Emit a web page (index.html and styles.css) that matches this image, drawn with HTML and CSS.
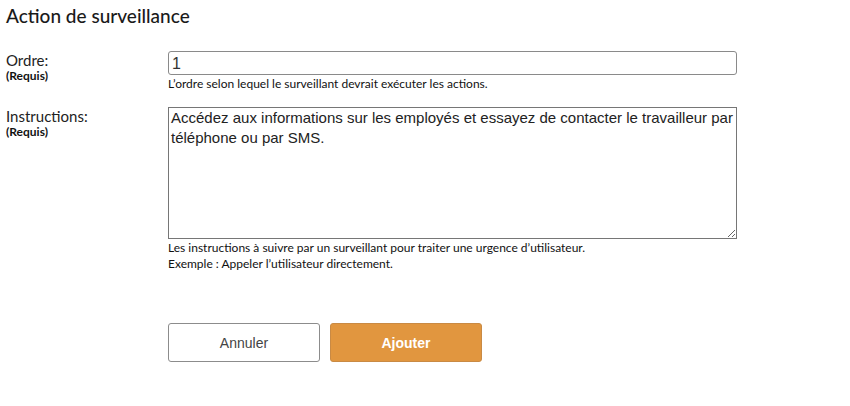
FILE: index.html
```html
<!DOCTYPE html>
<html lang="fr">
<head>
<meta charset="utf-8">
<link rel="stylesheet" href="styles.css">
</head>
<body>
<div class="page">
  <h1 class="title">Action de surveillance</h1>
  <div class="row row-order">
    <div class="label">
      <div class="label-name">Ordre:</div>
      <div class="label-req">(Requis)</div>
    </div>
    <div class="field">
      <input class="input" type="text" value="1">
      <div class="help">L’ordre selon lequel le surveillant devrait exécuter les actions.</div>
    </div>
  </div>
  <div class="row row-instr">
    <div class="label">
      <div class="label-name">Instructions:</div>
      <div class="label-req">(Requis)</div>
    </div>
    <div class="field">
      <textarea class="textarea">Accédez aux informations sur les employés et essayez de contacter le travailleur par téléphone ou par SMS.</textarea>
      <div class="help">Les instructions à suivre par un surveillant pour traiter une urgence d’utilisateur.<br>Exemple : Appeler l’utilisateur directement.</div>
    </div>
  </div>
  <div class="actions">
    <button class="btn btn-cancel" type="button">Annuler</button>
    <button class="btn btn-add" type="button">Ajouter</button>
  </div>
</div>
</body>
</html>
```
FILE: styles.css
```css
html, body {
  margin: 0;
  padding: 0;
  background: #fff;
}
.page {
  padding: 4px 6px;
  font-family: Lato, "Open Sans", sans-serif;
  color: #222;
}
.title {
  margin: 0 0 23px 0;
  font-size: 19px;
  font-weight: 500;
  line-height: 24px;
  color: #1a1a1a;
}
.row {
  display: grid;
  grid-template-columns: 162px 569px;
}
.row-instr {
  margin-top: 15px;
}
.label {
  padding-top: 1px;
}
.label-name {
  font-size: 15px;
  line-height: 17px;
  color: #222;
}
.label-req {
  font-size: 12px;
  font-weight: 700;
  line-height: 14px;
  color: #111;
}
.field {
  display: flex;
  flex-direction: column;
}
.input {
  box-sizing: border-box;
  width: 569px;
  height: 24px;
  margin: 0;
  padding: 1px 3px 0;
  border: 1px solid #8a8a8a;
  border-radius: 3px;
  font-family: "Liberation Sans", Arial, sans-serif;
  font-size: 16px;
  color: #333;
}
.textarea {
  box-sizing: border-box;
  width: 569px;
  height: 132px;
  margin: 0;
  padding: 0 2px;
  border: 1px solid #767676;
  border-radius: 0;
  font-family: "Liberation Sans", Arial, sans-serif;
  font-size: 15px;
  line-height: 20px;
  color: #222;
  resize: both;
}
.help {
  margin-top: 1px;
  font-size: 12px;
  line-height: 16px;
  color: #111;
}
.actions {
  display: flex;
  gap: 10px;
  margin-top: 51px;
  margin-left: 162px;
}
.btn {
  box-sizing: border-box;
  width: 152px;
  height: 39px;
  border-radius: 3px;
  font-family: "Liberation Sans", Arial, sans-serif;
  font-size: 14px;
  cursor: pointer;
}
.btn-cancel {
  background: #fff;
  border: 1px solid #8c8c8c;
  color: #444;
}
.btn-add {
  background: #e1963f;
  border: 1px solid #c98a44;
  color: #fff;
  font-weight: 700;
}
```
